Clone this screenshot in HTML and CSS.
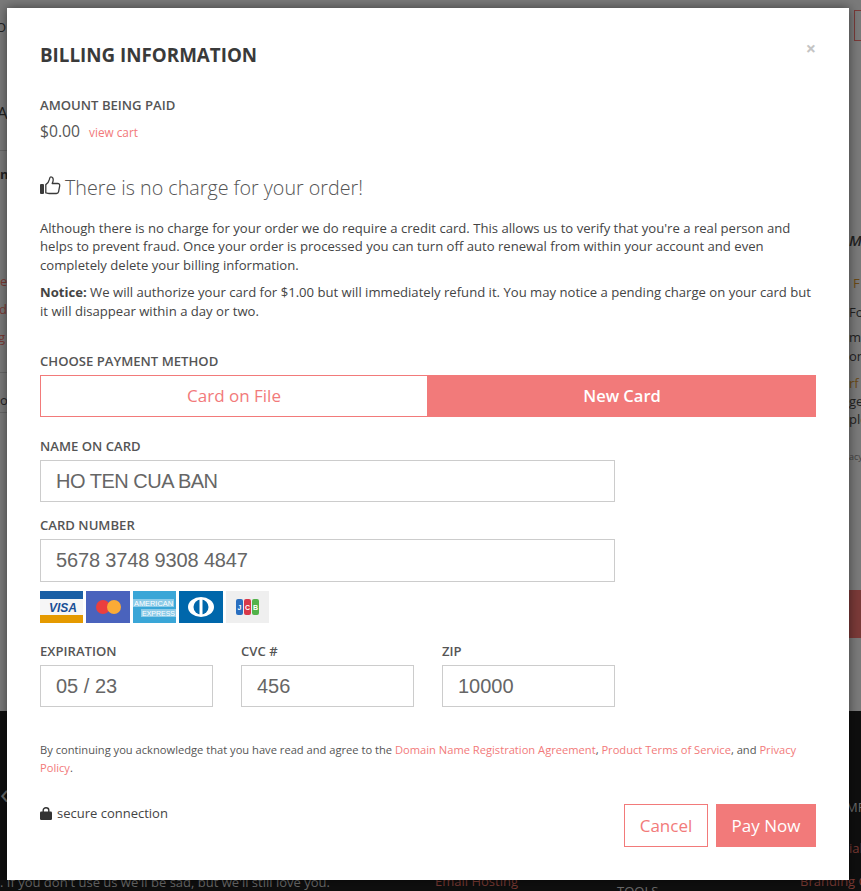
FILE: index.html
```html
<!DOCTYPE html>
<html lang="en">
<head>
<meta charset="utf-8">
<title>Billing Information</title>
<link rel="stylesheet" href="styles.css">
</head>
<body>
<div class="backdrop">
  <div class="band-top"></div>
  <div class="band-dark"></div>
  <span class="scrap s1">O</span>
  <span class="scrap s2">A</span>
  <span class="scrap s3">n</span>
  <span class="scrap red s4">e</span>
  <span class="scrap red s5">d</span>
  <span class="scrap red s6">g</span>
  <span class="scrap s7">o</span>
  <span class="line l1"></span>
  <span class="line l2"></span>
  <span class="line l3"></span>
  <span class="scrap s8">MA</span>
  <span class="scrap brown s9">F</span>
  <span class="scrap s10">For</span>
  <span class="scrap s11">mu<br>on</span>
  <span class="scrap s12"><span class="brown">rf</span><br>ge<br>ple</span>
  <span class="scrap small s13">acy</span>
  <span class="redbtn"></span>
  <span class="topbtn"></span>
  <span class="scrap light s14">MP</span>
  <span class="scrap red s15">ial</span>
  <span class="scrap red s16">Branding G</span>
  <span class="scrap light s17">TOOLS</span>
  <span class="scrap red s18">Email Hosting</span>
  <span class="scrap light s19">. If you don't use us we'll be sad, but we'll still love you.</span>
  <span class="scrap light s20">‹</span>
</div>

<main class="modal">
  <button class="close" type="button" aria-label="Close">×</button>
  <h1 class="title">Billing Information</h1>

  <section class="amount">
    <div class="label">Amount being paid</div>
    <div class="amount-row"><span class="price">$0.00</span><a class="link small-link" href="#">view cart</a></div>
  </section>

  <h2 class="no-charge">
    <svg class="thumb" viewBox="0 0 21 19" width="21" height="19" aria-hidden="true">
      <rect x="0" y="8" width="4" height="10" rx="1" fill="#3a3a3a"/>
      <path d="M5.800 16.800V8.600C7.400 7.600 9 5.300 9.400 3.400 9.600 2.200 9.700.9 10.900.9c2 0 2.600 2 2.200 3.900-.2 1-.7 1.900-.9 2.700h5.500c1.400 0 2.300 1 2 2.300l-1.100 5.900c-.2 1.100-1.100 1.800-2.200 1.800H9.300c-1.400 0-2.200-.3-3.500-.7z" fill="none" stroke="#3a3a3a" stroke-width="1.300" stroke-linejoin="round"/>
    </svg>
    There is no charge for your order!
  </h2>

  <p class="copy">Although there is no charge for your order we do require a credit card. This allows us to verify that you're a real person and helps to prevent fraud. Once your order is processed you can turn off auto renewal from within your account and even completely delete your billing information.</p>
  <p class="copy notice"><strong>Notice:</strong> We will authorize your card for $1.00 but will immediately refund it. You may notice a pending charge on your card but it will disappear within a day or two.</p>

  <div class="label method-label">Choose payment method</div>
  <div class="tabs">
    <button class="tab" type="button">Card on File</button>
    <button class="tab active" type="button">New Card</button>
  </div>

  <form class="card-form">
    <label class="label field-label" for="name">Name on card</label>
    <input class="input input-name" id="name" value="HO TEN CUA BAN">

    <label class="label field-label number-label" for="number">Card number</label>
    <input class="input input-number" id="number" value="5678 3748 9308 4847">

    <div class="brands" aria-hidden="true">
      <svg class="brand" viewBox="0 0 43 32"><rect width="43" height="32" fill="#f6f6f6"/><rect width="43" height="8" fill="#1a5fa5"/><rect y="24" width="43" height="8" fill="#e59a00"/><text x="23" y="21" text-anchor="middle" class="visa">VISA</text></svg>
      <svg class="brand wide" viewBox="0 0 44 32"><rect width="44" height="32" fill="#4a63bd"/><circle cx="17" cy="16" r="7" fill="#ea3f3f"/><circle cx="28" cy="16" r="7" fill="#fbab36"/></svg>
      <svg class="brand" viewBox="0 0 43 32"><rect width="43" height="32" fill="#3aa6d7"/><rect y="8" width="41" height="8" fill="#8ccbe8"/><rect x="8" y="18" width="35" height="8" fill="#8ccbe8"/><text x="1" y="15" textLength="39" lengthAdjust="spacingAndGlyphs" class="amex">AMERICAN</text><text x="9" y="25" textLength="33" lengthAdjust="spacingAndGlyphs" class="amex">EXPRESS</text></svg>
      <svg class="brand wide" viewBox="0 0 44 32"><rect width="44" height="32" fill="#0067ab"/><ellipse cx="22" cy="16" rx="13" ry="10" fill="#fff"/><circle cx="22" cy="16" r="7.500" fill="#0067ab"/><rect x="20.500" y="8" width="3" height="16" fill="#fff"/></svg>
      <svg class="brand" viewBox="0 0 43 32"><rect width="43" height="32" fill="#efefef"/><rect x="10" y="8" width="7" height="16" rx="2" fill="#2a6fc0"/><rect x="18" y="8" width="7" height="16" rx="2" fill="#d8394a"/><rect x="26" y="8" width="7" height="16" rx="2" fill="#52b24a"/><text x="13.500" y="19" class="jcb">J</text><text x="21.500" y="19" class="jcb">C</text><text x="29.500" y="19" class="jcb">B</text></svg>
    </div>

    <div class="triple">
      <div class="cell"><label class="label field-label" for="exp">Expiration</label><input class="input" id="exp" value="05 / 23"></div>
      <div class="cell"><label class="label field-label" for="cvc">CVC #</label><input class="input" id="cvc" value="456"></div>
      <div class="cell"><label class="label field-label" for="zip">Zip</label><input class="input" id="zip" value="10000"></div>
    </div>
  </form>

  <p class="terms">By continuing you acknowledge that you have read and agree to the <a class="link" href="#">Domain Name Registration Agreement</a>, <a class="link" href="#">Product Terms of Service</a>, and <a class="link" href="#">Privacy Policy</a>.</p>

  <footer class="footer">
    <div class="secure">
      <svg class="lock" viewBox="0 0 12 13" width="12" height="13" aria-hidden="true"><path d="M3.200 5V3.300C3.200 1.700 4.400.7 6 .7s2.800 1 2.800 2.600V5" fill="none" stroke="#333" stroke-width="1.400"/><rect y="4.600" width="12" height="8.400" rx="1.200" fill="#333"/></svg>
      secure connection
    </div>
    <div class="actions">
      <button class="btn outline" type="button">Cancel</button>
      <button class="btn solid" type="button">Pay Now</button>
    </div>
  </footer>
</main>
</body>
</html>
```
FILE: styles.css
```css
* { box-sizing: border-box; }
html, body { margin: 0; height: 100%; overflow: hidden; }
body { font-family: "Open Sans", sans-serif; color: #444; background: #0f0f0f; position: relative; width: 861px; height: 891px; }

.backdrop { position: absolute; inset: 0; overflow: hidden; }
.band-top { position: absolute; left: 0; right: 0; top: 0; height: 711px; background: #7a7a7a; }
.band-dark { position: absolute; left: 0; right: 0; top: 711px; bottom: 0; background: #0f0f0f; }
.scrap { position: absolute; font-size: 13px; line-height: 18px; color: #222; white-space: nowrap; }
.scrap.red { color: #7a3a34; }
.scrap.brown, .brown { color: #6b4a16; }
.scrap.light { color: #6a6a6a; }
.scrap.small { font-size: 9px; color: #444; }
.s1 { left: -4px; top: 18px; }
.s2 { left: -3px; top: 104px; font-size: 17px; }
.s3 { left: 0; top: 165px; font-weight: 700; }
.s4 { left: 0; top: 272px; }
.s5 { left: -1px; top: 300px; }
.s6 { left: -2px; top: 328px; }
.s7 { left: 0; top: 391px; }
.s8 { left: 849px; top: 231px; font-size: 15px; font-style: italic; font-weight: 600; }
.s9 { left: 853px; top: 274px; }
.s10 { left: 849px; top: 303px; }
.s11 { left: 849px; top: 328px; line-height: 19px; }
.s12 { left: 849px; top: 374px; }
.s13 { left: 849px; top: 448px; }
.s14 { left: 846px; top: 798px; }
.s15 { left: 849px; top: 839px; color: #8a4a44; }
.s16 { left: 800px; top: 872px; }
.s17 { left: 617px; top: 882px; }
.s18 { left: 435px; top: 872px; }
.s19 { left: 0; top: 873px; }
.s20 { left: 0; top: 784px; font-size: 30px; }
.line { position: absolute; left: 0; width: 7px; height: 1px; background: #666; }
.l1 { top: 150px; }
.l2 { top: 372px; }
.l3 { top: 412px; }
.redbtn { position: absolute; left: 849px; top: 590px; width: 12px; height: 48px; background: #7a3a38; }
.topbtn { position: absolute; left: 854px; top: 10px; width: 12px; height: 31px; border: 1px solid #7a3a38; }

.modal { position: absolute; left: 7px; top: 8px; width: 842px; height: 872px; background: #fff; padding: 32px 33px 0; box-shadow: 0 0 10px rgba(0,0,0,.5); }
.close { position: absolute; right: 33px; top: 30px; padding: 0; border: 0; background: none; font: 700 18px/20px "Open Sans", sans-serif; color: #c4c4c4; }
.title { margin: 0; font-size: 18.800px; line-height: 30px; font-weight: 700; color: #3a3a3a; text-transform: uppercase; }
.label { display: block; font-size: 13.120px; line-height: 18px; font-weight: 600; color: #555; text-transform: uppercase; }
.amount { margin-top: 26px; }
.amount-row { margin-top: 5px; display: flex; align-items: baseline; gap: 9px; }
.price { font-size: 15.700px; line-height: 24px; color: #555; }
.link { color: #f27a7a; text-decoration: none; }
.small-link { font-size: 11.800px; }
.no-charge { margin: 31px 0 0; font-size: 19.700px; line-height: 28px; font-weight: 300; color: #555; display: flex; align-items: center; gap: 4px; }
.thumb { flex: none; margin-top: -5px; }
.copy { margin: 17px 0 0; font-size: 13.120px; line-height: 18.400px; color: #444; }
.notice { margin-top: 9px; }
.notice strong { font-weight: 700; }
.method-label { margin-top: 32px; }
.tabs { margin-top: 5px; display: flex; height: 42px; }
.tab { flex: 0 0 50%; border: 1px solid #f27a7a; background: #fff; color: #f27a7a; font: 400 17px/20px "Open Sans", sans-serif; padding: 0; }
.tab.active { background: #f27a7a; color: #fff; font-size: 16.500px; font-weight: 600; }
.card-form { width: 575px; margin-top: 20px; }
.field-label { margin-bottom: 5px; }
.number-label { margin-top: 14px; }
.input { display: block; width: 100%; height: 43px; border: 1px solid #ccc; padding: 0 15px; font: 400 20px "Liberation Sans", Arial, sans-serif; color: #666; background: #fff; border-radius: 0; outline: 0; }
.input-name { height: 42px; letter-spacing: -0.5px; }
.input-number { letter-spacing: -0.15px; }
.brands { display: flex; gap: 3px; margin-top: 9px; height: 32px; }
.brand { width: 43px; height: 32px; display: block; }
.brand.wide { width: 44px; }
.visa { font: italic 700 12px "Liberation Sans", sans-serif; fill: #1a4f95; }
.amex { font: 400 7.500px "Liberation Sans", sans-serif; fill: #fff; }
.jcb { font: 700 7px "Liberation Sans", sans-serif; fill: #fff; text-anchor: middle; }
.triple { display: grid; grid-template-columns: repeat(3, 173px); column-gap: 28px; margin-top: 19px; }
.triple .input { height: 42px; }
.terms { margin: 34px 0 0; font-size: 11.150px; line-height: 18px; color: #555; }
.footer { margin-top: 27px; display: flex; justify-content: space-between; align-items: flex-start; }
.secure { display: flex; align-items: center; gap: 5px; font-size: 13px; line-height: 18px; color: #444; }
.actions { display: flex; gap: 8px; }
.btn { height: 43px; font: 400 17px/20px "Open Sans", sans-serif; padding: 0; border: 1px solid #f27a7a; border-radius: 0; }
.outline { width: 84px; background: #fff; color: #f27a7a; }
.solid { width: 100px; background: #f27a7a; color: #fff; font-weight: 500; }
```
